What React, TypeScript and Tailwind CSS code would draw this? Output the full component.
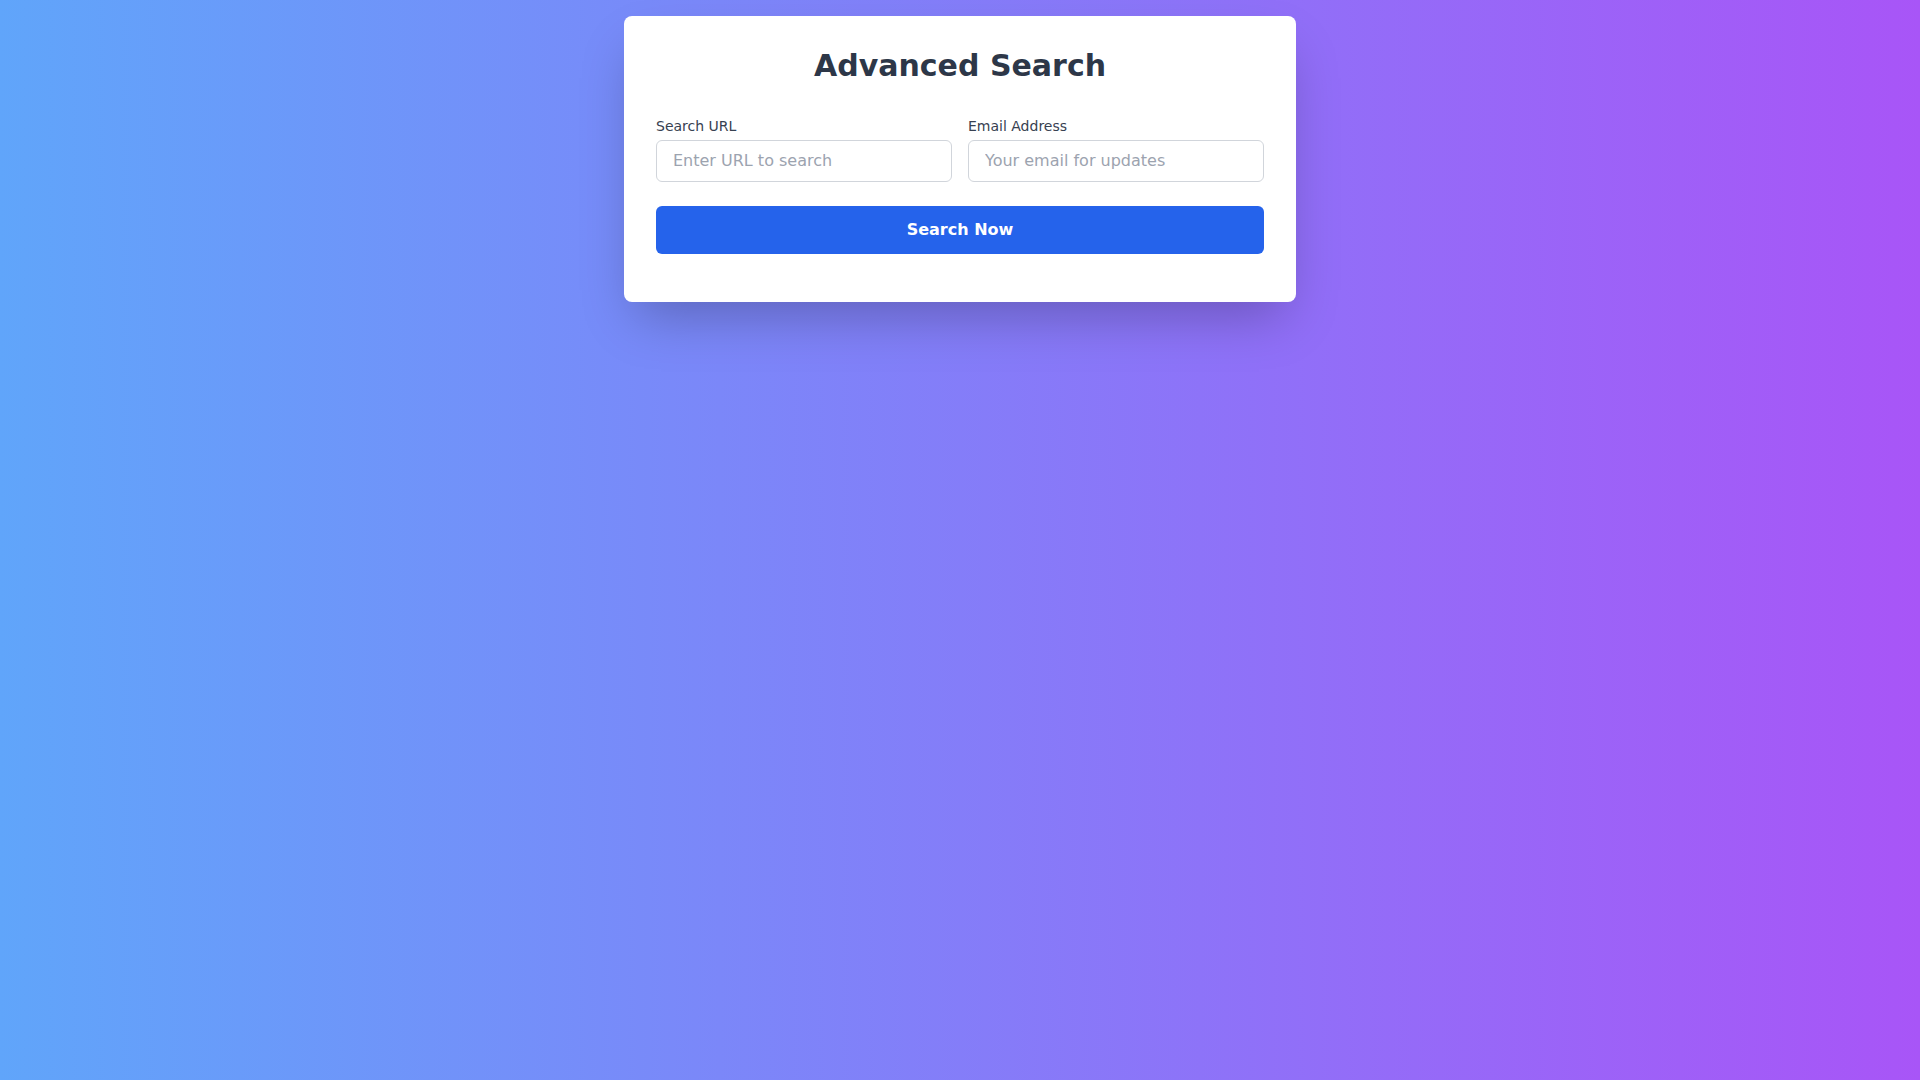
import React, { useState } from "react";

export default function App() {
  const [url, setUrl] = useState("");
  const [email, setEmail] = useState("");

  return (
    <div
      className="min-h-screen w-full bg-[linear-gradient(to_right,#60a5fa,#a855f7)] p-4"
      style={{ fontFamily: '"DejaVu Sans", Verdana, sans-serif' }}
    >
      <div className="mx-auto max-w-2xl rounded-lg bg-white p-8 pb-12 shadow-2xl">
        <h1 className="mb-8 text-center text-3xl font-bold text-[#2d3748]">
          Advanced Search
        </h1>
        <form
          className="space-y-6"
          onSubmit={(e) => {
            e.preventDefault();
          }}
        >
          <div className="grid grid-cols-2 gap-4">
            <div>
              <label className="mb-1 block text-sm text-[#374151]">Search URL</label>
              <input
                type="text"
                value={url}
                onChange={(e) => setUrl(e.target.value)}
                placeholder="Enter URL to search"
                className="w-full rounded-md border border-[#d1d5db] px-4 py-2 text-base text-[#1f2937] placeholder-[#9ca3af] outline-none"
              />
            </div>
            <div>
              <label className="mb-1 block text-sm text-[#374151]">Email Address</label>
              <input
                type="email"
                value={email}
                onChange={(e) => setEmail(e.target.value)}
                placeholder="Your email for updates"
                className="w-full rounded-md border border-[#d1d5db] px-4 py-2 text-base text-[#1f2937] placeholder-[#9ca3af] outline-none"
              />
            </div>
          </div>
          <button
            type="submit"
            className="w-full rounded-md bg-[#2563eb] py-3 text-base font-bold text-white"
          >
            Search Now
          </button>
        </form>
      </div>
    </div>
  );
}
